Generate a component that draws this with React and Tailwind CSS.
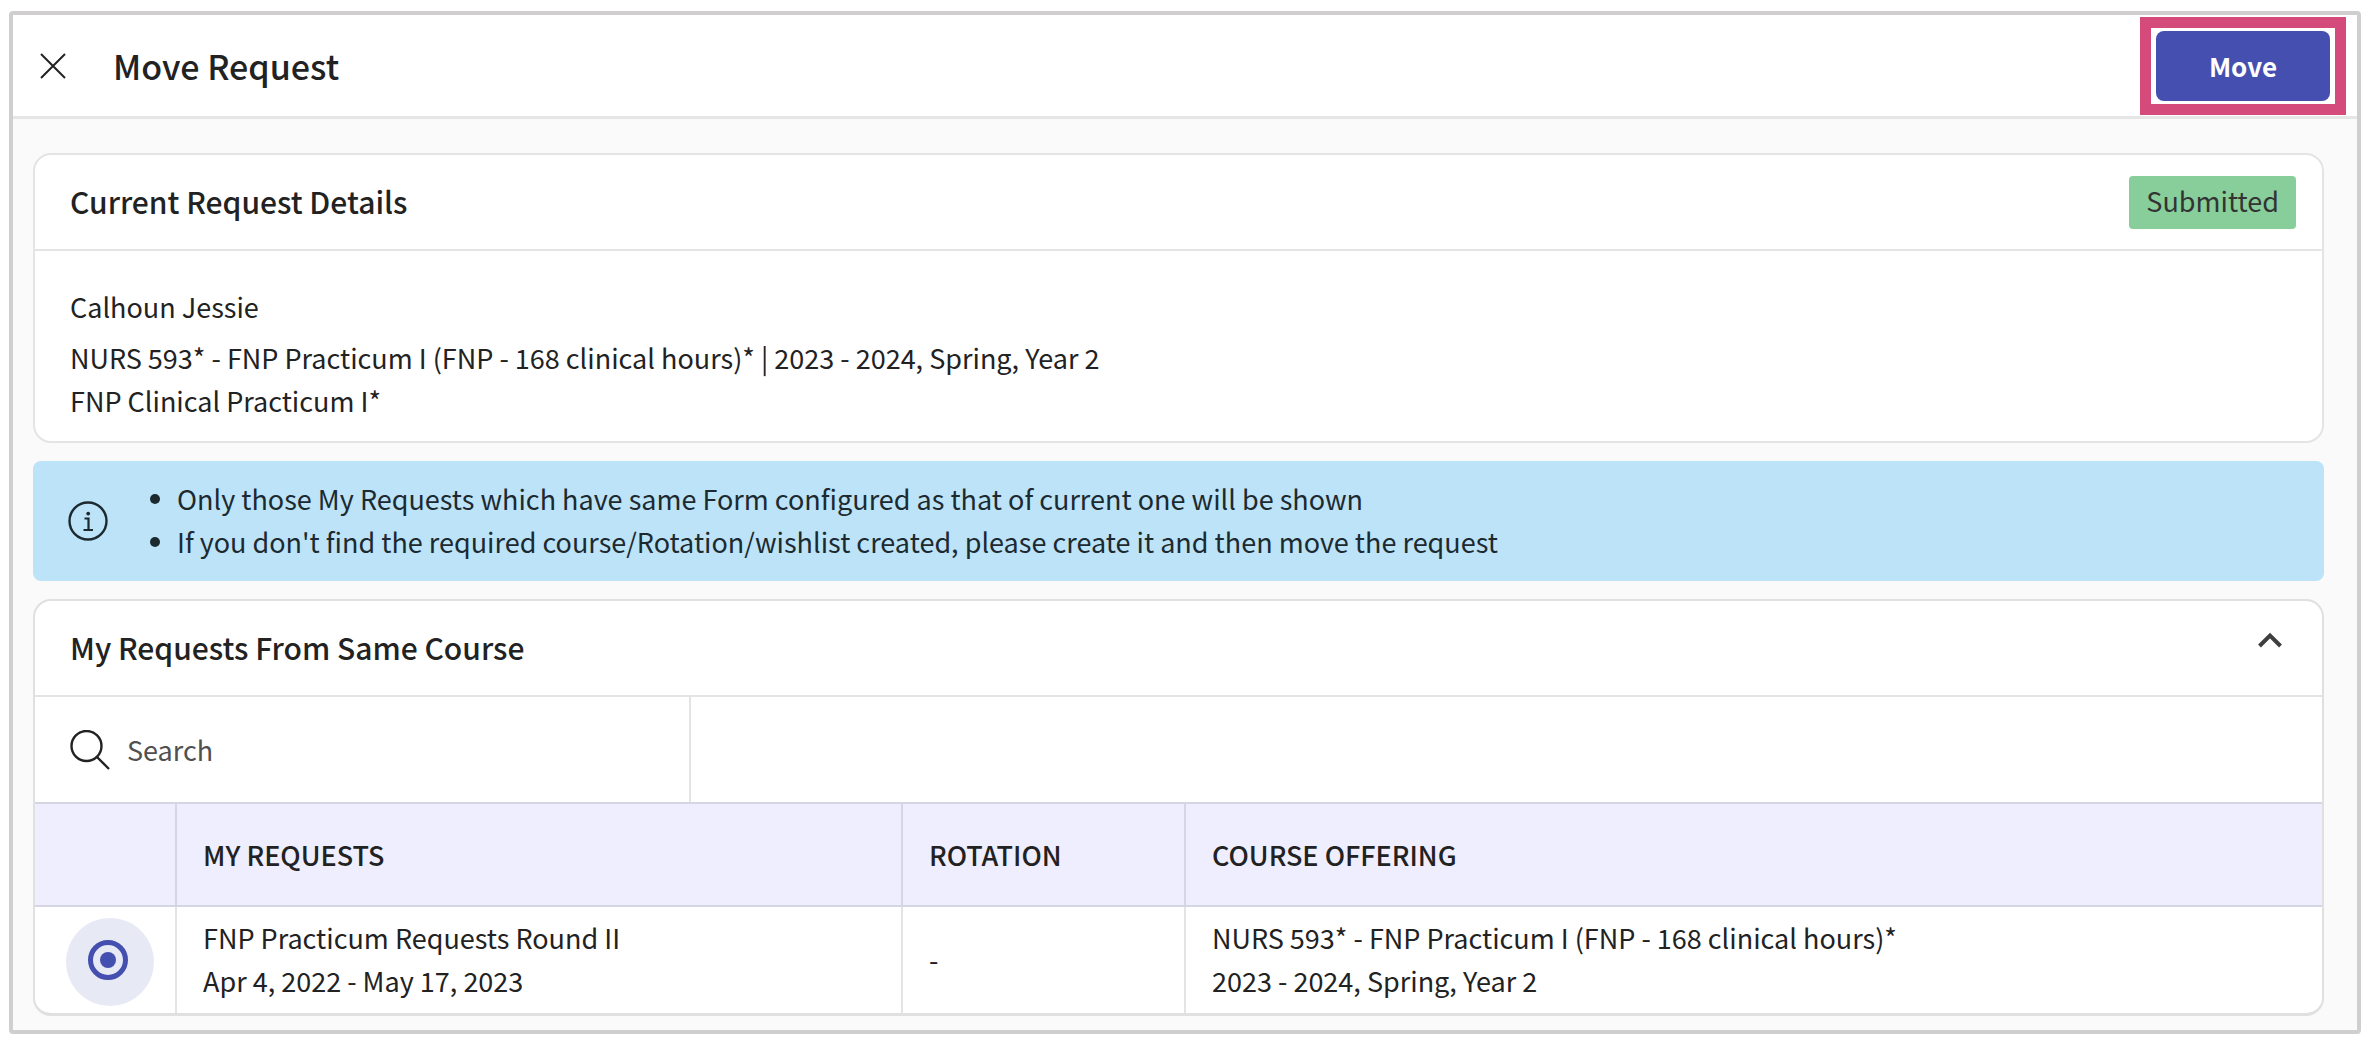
import { useState } from "react"

const notes = [
  "Only those My Requests which have same Form configured as that of current one will be shown",
  "If you don't find the required course/Rotation/wishlist created, please create it and then move the request",
]

const requests = [
  {
    id: 1,
    name: "FNP Practicum Requests Round II",
    dates: "Apr 4, 2022 - May 17, 2023",
    rotation: "-",
    course: "NURS 593* - FNP Practicum I (FNP - 168 clinical hours)*",
    term: "2023 - 2024, Spring, Year 2",
  },
]

function CloseIcon() {
  return (
    <svg width="26" height="26" viewBox="0 0 26 26" fill="none" stroke="#222" strokeWidth="2">
      <path d="M1 1l24 24M25 1L1 25" />
    </svg>
  )
}

function InfoIcon() {
  return (
    <svg width="40" height="40" viewBox="0 0 40 40" fill="none" stroke="#1c2a30" strokeWidth="2.4" className="shrink-0">
      <circle cx="20" cy="20" r="18.5" />
      <path d="M16.5 17.5h4v11.5M15.5 29h9.5" strokeWidth="2.2" />
      <circle cx="20.2" cy="12.6" r="1.9" fill="#1c2a30" stroke="none" />
    </svg>
  )
}

function SearchIcon() {
  return (
    <svg width="40" height="40" viewBox="0 0 40 40" fill="none" stroke="#222" strokeWidth="2.4" className="shrink-0">
      <circle cx="16.5" cy="16" r="15" />
      <path d="M27 27L39 39" />
    </svg>
  )
}

function ChevronUp() {
  return (
    <svg width="24" height="16" viewBox="0 0 24 16" fill="none" stroke="#3f3f3f" strokeWidth="4">
      <path d="M1.5 14L12 3.5L22.5 14" />
    </svg>
  )
}

export default function App() {
  const [selected, setSelected] = useState(1)
  const [search, setSearch] = useState("")
  const [open, setOpen] = useState(true)

  return (
    <div className="bg-white pt-[11px] pb-[10px] pl-[9px] pr-[13px] font-['Noto_Sans_CJK_SC',sans-serif] text-[27px] leading-[43px] text-[#222]">
      <div className="border-4 border-[#d0cece] rounded-[4px] bg-[#fafafa]">

        {/* Header */}
        <header className="flex items-center h-[104px] bg-white border-b-3 border-[#e6e6e6] pl-[27px] pr-[11px]">
          <button type="button" aria-label="Close">
            <CloseIcon />
          </button>
          <h1 className="ml-[47px] text-[34px] font-medium">Move Request</h1>
          <div className="ml-auto border-11 border-[#d44a7a] px-[5px] py-[3px]">
            <button type="button" className="block w-[174px] h-[70px] rounded-lg bg-[#444fb0] text-white text-[26px] font-bold">
              Move
            </button>
          </div>
        </header>

        <main className="flex flex-col gap-[18px] pt-[34px] pb-[14px] pl-5 pr-[33px]">

          {/* Current Request */}
          <section className="bg-white border-2 border-[#e4e4e4] rounded-[18px]">
            <div className="flex items-center justify-between h-24 border-b-2 border-[#e4e4e4] pl-[35px] pr-[26px]">
              <h2 className="pb-[2px] text-[30px] font-medium">Current Request Details</h2>
              <span className="h-[53px] leading-[50px] px-[17px] rounded-[4px] bg-[#87ce9b] text-[#333]">
                Submitted
              </span>
            </div>
            <div className="px-[35px] pt-[34px] pb-[19px]">
              <p className="mb-2">Calhoun Jessie</p>
              <p>NURS 593* - FNP Practicum I (FNP - 168 clinical hours)* | 2023 - 2024, Spring, Year 2</p>
              <p>FNP Clinical Practicum I*</p>
            </div>
          </section>

          {/* Info Banner */}
          <section className="flex items-center h-[120px] pl-[35px] rounded-lg bg-[#bce3f8] text-[#1c2a30]">
            <InfoIcon />
            <ul className="ml-[42px] pb-[2px]">
              {notes.map((note) => (
                <li key={note} className="flex items-center gap-[17px]">
                  <span className="w-[10px] h-[10px] rounded-full bg-[#1c2a30]" />
                  {note}
                </li>
              ))}
            </ul>
          </section>

          {/* My Requests */}
          <section className="bg-white border-2 border-b-3 border-[#e0e0e0] rounded-[18px] overflow-hidden">
            <div className="flex items-center justify-between h-24 border-b-2 border-[#e4e4e4] pl-[35px] pr-[40px]">
              <h2 className="pb-[2px] text-[30px] font-medium">My Requests From Same Course</h2>
              <button type="button" aria-label="Toggle section" onClick={() => setOpen(!open)} className="pb-4">
                <ChevronUp />
              </button>
            </div>

            {open && (
              <>
                <label className="flex items-center gap-[17px] w-[656px] h-[105px] pl-[35px] border-r-2 border-[#e4e4e4]">
                  <SearchIcon />
                  <input
                    type="text"
                    aria-label="Search"
                    value={search}
                    onChange={(e) => setSearch(e.target.value)}
                    placeholder="Search"
                    className="w-full outline-none placeholder:text-[#505050]"
                  />
                </label>

                <table className="w-full table-fixed border-separate border-spacing-0 text-left">
                  <thead>
                    <tr className="h-[105px] bg-[#efeefe]">
                      <th className="w-[142px] border-y-2 border-r-2 border-[#d6d5e4]"></th>
                      <th className="w-[726px] border-y-2 border-r-2 border-[#d6d5e4] px-[26px] font-medium">MY REQUESTS</th>
                      <th className="w-[283px] border-y-2 border-r-2 border-[#d6d5e4] px-[26px] font-medium">ROTATION</th>
                      <th className="border-y-2 border-[#d6d5e4] px-[26px] font-medium">COURSE OFFERING</th>
                    </tr>
                  </thead>
                  <tbody>
                    {requests.map((req) => (
                      <tr key={req.id} className="h-[106px]">
                        <td className="border-r-2 border-[#e4e4e4] pl-[31px] pt-[3px]">
                          <label className="flex items-center justify-center w-[88px] h-[88px] pr-1 pb-1 rounded-full bg-[#e7e9f5]">
                            <input
                              type="radio"
                              name="request"
                              aria-label={req.name}
                              checked={selected === req.id}
                              onChange={() => setSelected(req.id)}
                              className="flex items-center justify-center appearance-none w-10 h-10 rounded-full border-5 border-[#444fb0] checked:before:block checked:before:w-4 checked:before:h-4 checked:before:rounded-full checked:before:bg-[#444fb0]"
                            />
                          </label>
                        </td>
                        <td className="border-r-2 border-[#e4e4e4] px-[26px] pb-[2px]">
                          <p>{req.name}</p>
                          <p>{req.dates}</p>
                        </td>
                        <td className="border-r-2 border-[#e4e4e4] px-[26px] pb-[2px]">{req.rotation}</td>
                        <td className="px-[26px] pb-[2px]">
                          <p>{req.course}</p>
                          <p>{req.term}</p>
                        </td>
                      </tr>
                    ))}
                  </tbody>
                </table>
              </>
            )}
          </section>
        </main>
      </div>
    </div>
  )
}
